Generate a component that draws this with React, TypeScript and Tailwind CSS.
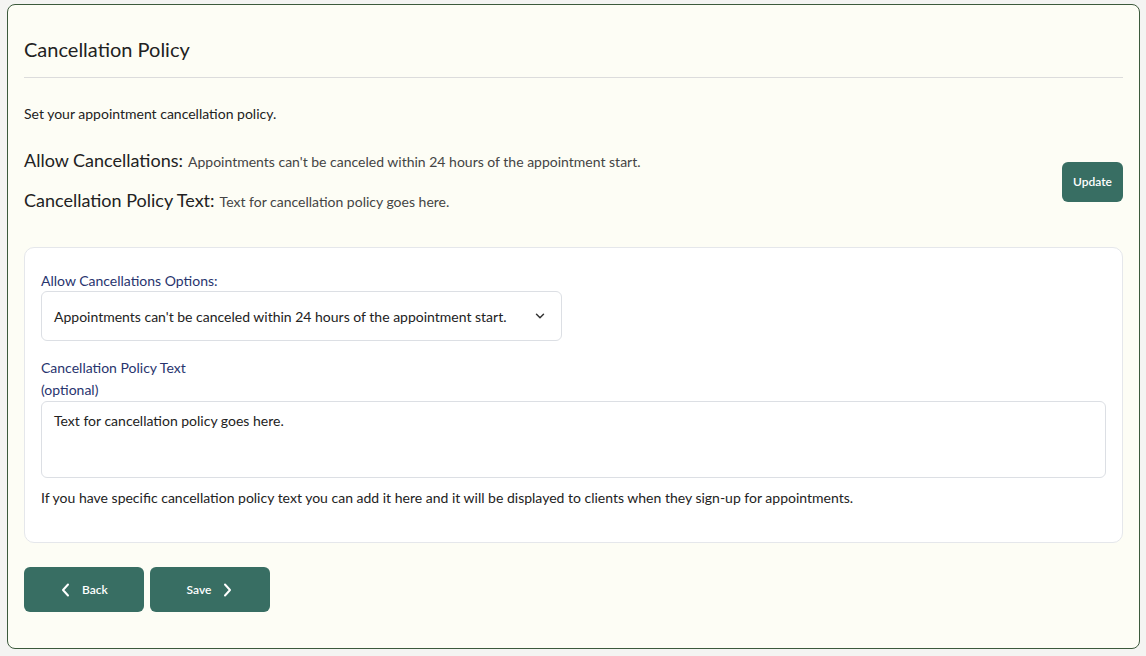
import React from "react";

export default function App() {
  return (
    <div className="w-[1146px] h-[656px] bg-[#f4f4f2] p-[4px_6px_7px_7px]" style={{ fontFamily: 'Lato, "Noto Sans", sans-serif' }}>
      <div className="h-full rounded-[8px] border border-[#3c5a3c] bg-[#fdfdf5] px-[16px] pt-[32px]">
        <h1 className="text-[20px] leading-[24px] text-[#222] pb-[16px] border-b border-[#dcdcdc]">Cancellation Policy</h1>
        <p className="mt-[26px] text-[14px] leading-[20px] text-[#222]">Set your appointment cancellation policy.</p>
        <div className="mt-[24px] flex items-center justify-between">
          <div>
            <div className="flex items-baseline gap-[5px]">
              <span className="text-[18px] leading-[24px] text-[#222]">Allow Cancellations:</span>
              <span className="text-[14px] text-[#444]">Appointments can't be canceled within 24 hours of the appointment start.</span>
            </div>
            <div className="mt-[16px] flex items-baseline gap-[5px]">
              <span className="text-[18px] leading-[24px] text-[#222]">Cancellation Policy Text:</span>
              <span className="text-[14px] text-[#444]">Text for cancellation policy goes here.</span>
            </div>
          </div>
          <button className="mt-[4px] h-[40px] w-[61px] rounded-[6px] bg-[#386e63] text-white text-[12px] font-semibold">Update</button>
        </div>
        <div className="mt-[35px] rounded-[10px] border border-[#e5e7eb] bg-white px-[16px] pt-[23px] pb-[34px]">
          <label className="block text-[14px] leading-[20px] text-[#28346e]">Allow Cancellations Options:</label>
          <div className="mt-[0px] w-[521px] h-[50px] rounded-[6px] border border-[#dcdfe4] flex items-center justify-between pl-[12px] pr-[14px]">
            <span className="text-[14px] whitespace-nowrap text-[#222]">Appointments can't be canceled within 24 hours of the appointment start.</span>
            <svg width="14" height="14" viewBox="0 0 24 24" fill="none" stroke="#333" strokeWidth="2.5" strokeLinecap="round" strokeLinejoin="round"><path d="M6 9l6 6 6-6" /></svg>
          </div>
          <div className="mt-[16px] text-[14px] leading-[22px] text-[#28346e]">Cancellation Policy Text<br />(optional)</div>
          <div className="h-[77px] rounded-[6px] border border-[#dcdfe4] px-[12px] py-[8px] text-[14px] text-[#222]">Text for cancellation policy goes here.</div>
          <p className="mt-[10px] text-[14px] leading-[20px] text-[#222]">If you have specific cancellation policy text you can add it here and it will be displayed to clients when they sign-up for appointments.</p>
        </div>
        <div className="mt-[24px] flex gap-[6px]">
          <button className="w-[120px] h-[45px] rounded-[6px] bg-[#386e63] text-white text-[12px] font-semibold flex items-center justify-center gap-[10px]">
            <svg width="12" height="14" viewBox="0 0 12 14" fill="none" stroke="white" strokeWidth="2" strokeLinecap="round" strokeLinejoin="round"><path d="M8 1.5L3 7l5 5.5" /></svg>
            Back
          </button>
          <button className="w-[120px] h-[45px] rounded-[6px] bg-[#386e63] text-white text-[12px] font-semibold flex items-center justify-center gap-[10px]">
            Save
            <svg width="12" height="14" viewBox="0 0 12 14" fill="none" stroke="white" strokeWidth="2" strokeLinecap="round" strokeLinejoin="round"><path d="M4 1.5L9 7l-5 5.5" /></svg>
          </button>
        </div>
      </div>
    </div>
  );
}
